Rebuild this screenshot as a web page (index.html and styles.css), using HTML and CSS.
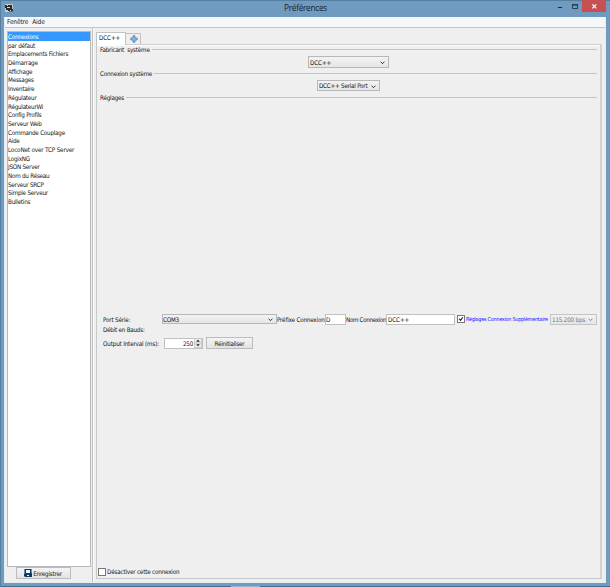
FILE: index.html
```html
<!DOCTYPE html>
<html lang="fr">
<head>
<meta charset="utf-8">
<title>Préférences</title>
<link rel="stylesheet" href="styles.css">
</head>
<body>
<div class="window">
  <header class="titlebar">
    <svg class="app-icon" viewBox="0 0 9 9"><path fill="#c4cccc" d="M0 0h8v8H0z"/><path fill="#252b2d" d="M0 1h7v4h1v2H6V6H5v1H3V6H1V4H0z"/><path fill="#d4d8d8" d="M2 3h3v1H2zM2 1h1v1H2z"/><path fill="#b84b50" d="M4 7h4v1H4z"/></svg>
    <h1 class="title">Préférences</h1>
    <div class="controls">
      <svg class="minmax" viewBox="0 0 26 12"><path fill="#172a3b" d="M2 7h4v1H2z"/><path fill="none" stroke="#263e53" d="M16.5 4.5h5v4h-5z"/><path fill="#263e53" d="M16 4h6v1.6h-6z"/></svg>
      <div class="close"><svg viewBox="0 0 24 11"><path d="M10.3 4.3l4 4m0-4l-4 4" stroke="#fff" stroke-width="1.2"/></svg></div>
    </div>
  </header>
  <div class="client">
    <nav class="menubar"><span>Fenêtre</span><span>Aide</span></nav>
    <div class="body">
      <aside class="side">
        <ul class="list">
          <li class="selected">Connexions</li><li>par défaut</li><li>Emplacements Fichiers</li><li>Démarrage</li><li>Affichage</li><li>Messages</li><li>Inventaire</li><li>Régulateur</li><li>RégulateurWi</li><li>Config Profils</li><li>Serveur Web</li><li>Commande Couplage</li><li>Aide</li><li class="loose">LocoNet over TCP Server</li><li>LogixNG</li><li>JSON Server</li><li>Nom du Réseau</li><li>Serveur SRCP</li><li>Simple Serveur</li><li>Bulletins</li>
        </ul>
        <div class="button save"><svg viewBox="0 0 8 8"><path fill="#14365f" d="M0 0h8v8H1L0 7z"/><path fill="#4f92d8" d="M0 0h1v5H0zM7 0h1v4H7z"/><path fill="#eef4fa" d="M2 1h4v3H2zM3 6h2v1H3z"/></svg><span>Enregistrer</span></div>
      </aside>
      <main class="main">
        <div class="tabs">
          <div class="tab active">DCC++</div>
          <div class="tab add"><svg viewBox="0 0 8 8"><path d="M3 .8h2V3h2.2v2H5v2.2H3V5H.8V3H3z" fill="#8db9e4" stroke="#5580ad" stroke-width=".8"/></svg></div>
        </div>
        <div class="panel">
          <section class="group maker"><h2>Fabricant&nbsp; système</h2><div class="combo wide"><span>DCC++</span><svg viewBox="0 0 5 4"><path d="M.6 .7l1.9 2L4.4 .7"/></svg></div></section>
          <section class="group link"><h2>Connexion système</h2><div class="combo serial"><span>DCC++ Serial Port</span><svg viewBox="0 0 5 4"><path d="M.6 .7l1.9 2L4.4 .7"/></svg></div></section>
          <section class="group settings">
            <h2>Réglages</h2>
            <div class="row port">
              <span class="label">Port Série:</span>
              <div class="combo com"><span>COM3</span><svg viewBox="0 0 5 4"><path d="M.6 .7l1.9 2L4.4 .7"/></svg></div>
              <span class="prefix">Préfixe Connexion</span><div class="field short">D</div>
              <span class="name">Nom Connexion</span><div class="field long">DCC++</div>
              <div class="check on"><svg viewBox="0 0 7 7"><path d="M1.4 3.2l1.5 1.9L5.7 1.5"/></svg></div>
              <span class="extra">Réglages Connexion Supplémentaire</span>
              <div class="combo disabled"><span>115.200 bps</span><svg viewBox="0 0 5 4"><path d="M.6 .7l1.9 2L4.4 .7"/></svg></div>
            </div>
            <div class="row baud"><span>Débit en Bauds:</span></div>
            <div class="row interval">
              <span class="label">Output Interval (ms):</span>
              <div class="spinner"><span>250</span><svg viewBox="0 0 8 10"><path fill="#e9e9e9" stroke="#b9b9b9" stroke-width=".7" d="M.3 .3h7.4v9.4H.3zM.3 5h7.4"/><path fill="#222" d="M2.2 3.8L4 1.7l1.8 2.1zM2.2 6.2L4 8.3l1.8-2.1z"/></svg></div>
              <div class="button reset"><span>Réinitialiser</span></div>
            </div>
          </section>
          <div class="disable"><div class="check"></div><span>Désactiver cette connexion</span></div>
        </div>
      </main>
    </div>
  </div>
  <footer class="edge"><i></i></footer>
</div>
</body>
</html>
```

FILE: styles.css
```css
* { box-sizing: border-box; }
body { margin: 0; width: 610px; height: 587px; overflow: hidden; font: 6.3px/9px "DejaVu Sans Condensed", "DejaVu Sans", sans-serif; font-stretch: condensed; letter-spacing: -.25px; color: #151515; white-space: nowrap; }
h1, h2, ul { margin: 0; padding: 0; font-weight: normal; }
svg { display: block; }
.window { height: 587px; display: flex; flex-direction: column; background: #6f9bc1; border-left: 1px solid #557f9f; border-top: 1px solid #557f9f; }
.titlebar { height: 16px; display: flex; position: relative; }
.app-icon { width: 9px; height: 9px; margin: 3px 0 0 4px; }
.title { position: absolute; left: 0; right: 0; top: 1px; text-align: center; font: 8.3px/12px "Open Sans", sans-serif; color: #17232e; letter-spacing: -.3px; }
.controls { margin-left: auto; display: flex; margin-right: 4px; }
.minmax { width: 26px; height: 12px; margin-top: -1px; }
.close { width: 24px; height: 12px; margin-top: -1px; background: #c75050; }
.close svg { width: 24px; height: 11px; }
.client { height: 566px; margin: 0 4px 0 3px; background: #efefef; border: 1px solid #e3edf5; border-top: 0; display: flex; flex-direction: column; }
.menubar { height: 11px; padding: 1px 0 0 2px; display: flex; gap: 4px; background: #f5f7fa; border-bottom: 1px solid #c4c4c4; font-size: 6.5px; letter-spacing: -.12px; }
.body { flex: 1; min-height: 0; display: flex; }
.side { flex: none; width: 88px; padding: 3px 1px 0 2px; border-right: 1px solid #c0c0c0; }
.list { height: 536px; list-style: none; background: #fff; border: 1px solid #b5bac0; }
.list li { height: 8.69px; line-height: 9.4px; }
.list .selected { background: #3399ff; color: #fff; }
.list .loose { letter-spacing: -.17px; }
.button { display: flex; align-items: center; justify-content: center; background: linear-gradient(#f4f4f4, #e3e3e3); border: 1px solid #bcbcbc; }
.save { width: 55px; height: 12px; margin-left: 9px; padding-right: 1px; gap: 1px; }
.save svg { width: 8px; height: 8px; }
.main { flex: 1; min-width: 0; padding: 4px 3px 3px 2px; border-left: 1px solid #fafafa; display: flex; flex-direction: column; }
.tabs { height: 13px; display: flex; align-items: flex-end; }
.tab { border: 1px solid #bfc2c6; border-bottom: 0; }
.tab.active { position: relative; width: 30px; height: 13px; padding: 0 0 0 2px; line-height: 10px; background: #fff; letter-spacing: -.1px; }
.tab.add { width: 15px; height: 12px; padding: 1px 0 0 4px; border-left: 0; }
.tab.add svg { width: 8px; height: 8px; }
.panel { flex: 1; margin-top: -1px; border: 1px solid #c7c9cb; border-right: 2px solid #d0d2d4; border-top-color: #ccc; box-shadow: inset 0 1px #fff; padding: 0 3px 2px 3px; display: flex; flex-direction: column; }
.group { height: 24px; }
.group h2 { font-size: 6.3px; height: 9px; line-height: 9px; display: flex; align-items: center; gap: 2px; letter-spacing: -.22px; }
.group h2::after { content: ""; flex: 1; height: 1px; background: #c4c4c4; }
.combo { display: flex; align-items: center; justify-content: space-between; padding: 0 3px 0 1px; height: 11px; border: 1px solid #b8b8b8; background: linear-gradient(#f3f3f3, #e5e5e5); }
.combo svg { width: 5px; height: 4px; margin-top: 2px; flex: none; }
.combo path { fill: none; stroke: #333; stroke-width: 1; }
.wide { width: 81px; height: 12px; margin: 2px auto 0; letter-spacing: -.1px; }
.serial { width: 63px; margin: 2px auto 0; }
.settings { flex: 1; }
.row { display: flex; align-items: center; padding-left: 3px; }
.port { margin-top: 211px; height: 12px; }
.port > * { flex: none; }
.label { width: 59px; letter-spacing: -.18px; }
.com { width: 115px; height: 10px; padding-left: 0; }
.prefix { width: 48px; letter-spacing: -.2px; }
.field { height: 11px; line-height: 9px; padding-left: 1px; background: #fff; border: 1px solid #c0c0c0; letter-spacing: -.1px; }
.short { width: 21px; padding-left: 0; }
.name { width: 40px; letter-spacing: -.36px; }
.long { width: 69px; }
.check { width: 8px; height: 8px; background: #fff; border: 1px solid #777; }
.check svg { width: 6px; height: 6px; }
.check path { fill: none; stroke: #111; stroke-width: 1.2; }
.on { margin: 0 1px 0 2px; }
.extra { width: 84px; font-size: 5.4px; color: #11f; letter-spacing: -.23px; }
.disabled { width: 47px; color: #777; border-color: #c4c4c4; letter-spacing: -.2px; }
.disabled path { stroke: #888; }
.baud { height: 9px; letter-spacing: -.25px; }
.interval { height: 12px; margin-top: 3px; }
.spinner { width: 39px; height: 11px; margin-left: 2px; display: flex; align-items: center; justify-content: flex-end; gap: 1px; background: #fff; border: 1px solid #c0c0c0; }
.spinner svg { width: 8px; height: 10px; }
.reset { width: 47px; height: 12px; margin-left: 3px; }
.disable { display: flex; align-items: center; gap: 1px; height: 9px; margin-left: -2px; letter-spacing: -.2px; }
.edge { height: 4px; border-bottom: 1px solid #466c8d; }
.edge i { display: block; width: 29px; height: 1px; margin: 3px 0 0 230px; background: #9ab3c8; }
```
